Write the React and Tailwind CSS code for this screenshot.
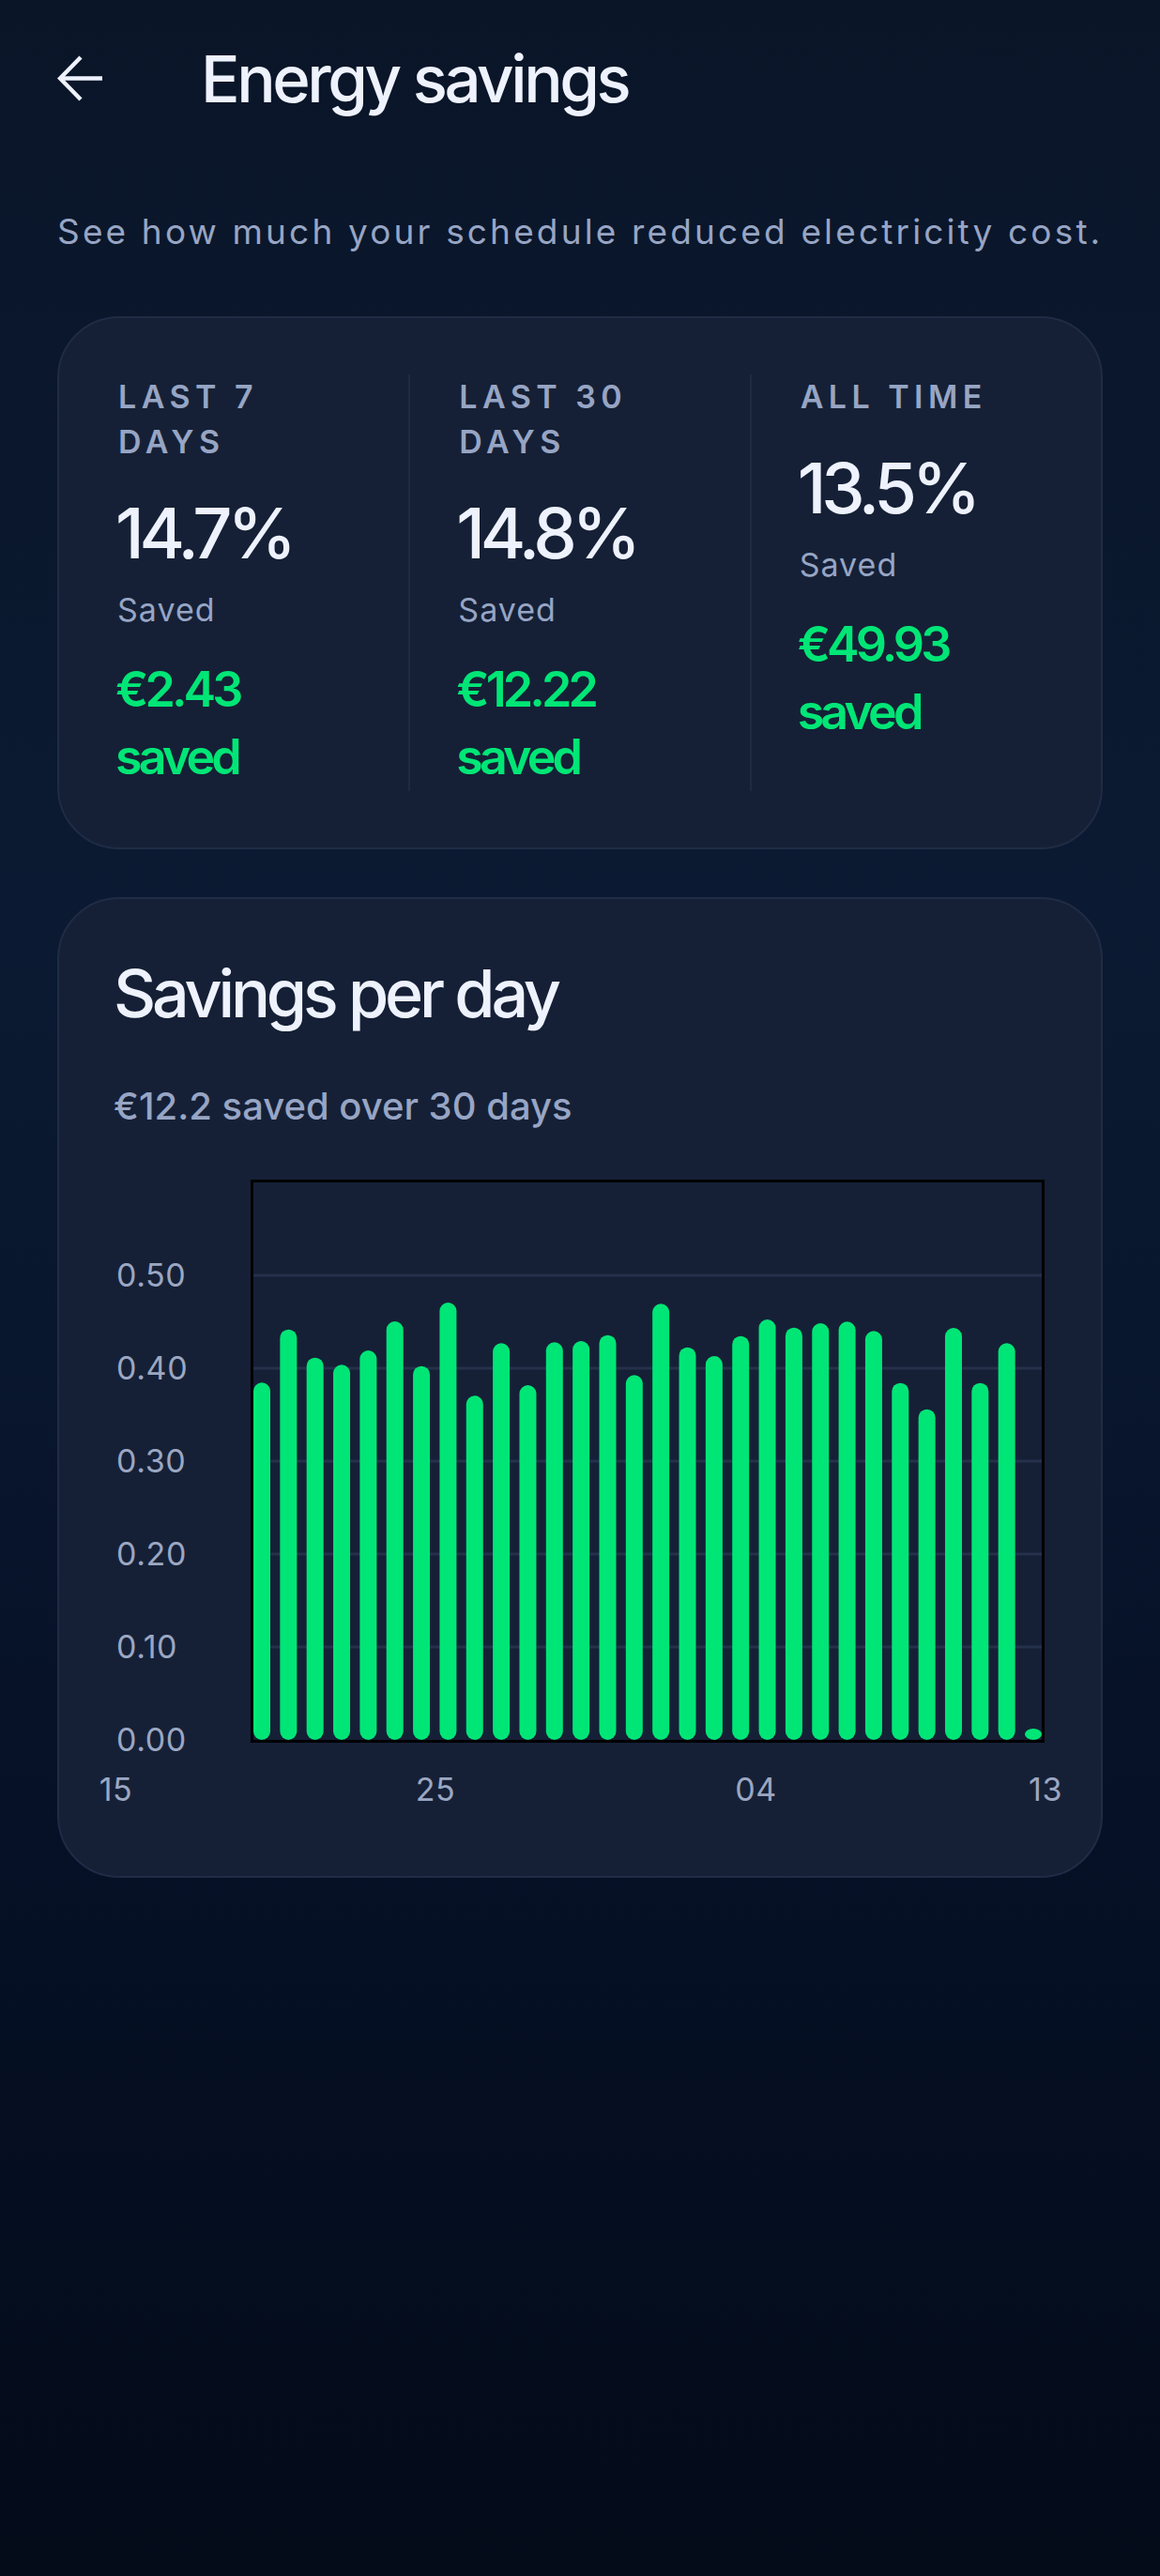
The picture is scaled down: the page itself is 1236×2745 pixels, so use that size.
import React from "react";

const BAR_TOPS = [
  1473.3, 1416.7, 1446.7, 1454.3, 1439, 1408, 1455.7, 1388, 1487.3, 1431.3,
  1476, 1430.3, 1429, 1422.7, 1465.3, 1389.3, 1435.7, 1445, 1423.7, 1406,
  1414.7, 1410, 1408.3, 1418.3, 1473.7, 1501.7, 1415, 1473.7, 1431.3, 1842,
];

const OY = 1207;

function Chart() {
  const grid = [0.5, 0.4, 0.3, 0.2, 0.1];
  const yLabels = [0.5, 0.4, 0.3, 0.2, 0.1, 0.0];
  const xLabels = [
    { t: "15", x: 60.5 },
    { t: "25", x: 401 },
    { t: "04", x: 742.5 },
    { t: "13", x: 1051 },
  ];
  return (
    <svg width="1110" height="724" viewBox="0 0 1110 724" className="block">
      {grid.map((v) => (
        <rect key={v} x="207" y={647 - v * 990 - 1.5} width="840" height="3" fill="#25314b" />
      ))}
      {BAR_TOPS.map((top, i) => {
        const y = top - OY;
        return (
          <rect
            key={i}
            x={207 + i * 28.345}
            y={y}
            width="18"
            height={647 - y}
            rx="9"
            fill="#00e676"
          />
        );
      })}
      <rect x="205.5" y="51.5" width="843" height="597" fill="none" stroke="#000000" strokeWidth="3" />
      {yLabels.map((v) => (
        <text
          key={v}
          x="61"
          y={647 - v * 990 + 12.4}
          fill="#9ba7c2"
          fontSize="34"
          letterSpacing="0.6"
          fontFamily="Inter, sans-serif"
        >
          {v.toFixed(2)}
        </text>
      ))}
      {xLabels.map((l) => (
        <text
          key={l.t}
          x={l.x}
          y="712"
          textAnchor="middle"
          fill="#9ba7c2"
          fontSize="34"
          letterSpacing="0.6"
          fontFamily="Inter, sans-serif"
        >
          {l.t}
        </text>
      ))}
    </svg>
  );
}

function Stat({ label, pct, money }) {
  return (
    <div className="flex-1 min-w-0 flex flex-col">
      <div className="text-[34px] leading-[48px] font-semibold tracking-[0.16em] text-[#97a5c4] uppercase">
        {label.map((l, i) => (
          <div key={i}>{l}</div>
        ))}
      </div>
      <div className="mt-[29px] -ml-[3px] text-[74px] leading-[89px] font-medium tracking-[-0.07em] text-[#eef2fd]">
        {pct}
      </div>
      <div className="mt-[13px] -ml-[1px] text-[34px] leading-[48px] tracking-[0.03em] text-[#97a5c4]">Saved</div>
      <div className="mt-[25px] -ml-[3px] text-[52px] leading-[72px] font-semibold tracking-[-0.075em] text-[#00e676]">
        <div>{money}</div>
        <div>saved</div>
      </div>
    </div>
  );
}

export default function App() {
  return (
    <div
      className="min-h-screen w-full bg-[linear-gradient(180deg,#0a1528_0%,#0b1a32_35%,#09172e_50%,#061127_70%,#040b19_100%)] px-[61px] pb-[40px]"
      style={{ fontFamily: "Inter, 'Noto Sans', sans-serif" }}
    >
      {/* Header */}
      <div className="pt-[42px] h-[126px] flex items-center">
        <div className="h-[84px] flex items-center">
          <svg width="50" height="50" viewBox="0 0 50 50" className="block">
            <path d="M25 2 L3 24.5 L25 47" fill="none" stroke="#eef2fd" strokeWidth="4.4" />
            <path d="M3.5 24.5 H48" fill="none" stroke="#eef2fd" strokeWidth="4.4" />
          </svg>
          <h1 className="ml-[103px] text-[69px] leading-[84px] font-medium tracking-[-0.05em] text-[#eef2fd]">
            Energy savings
          </h1>
        </div>
      </div>

      <p className="mt-[95px] text-[37px] leading-[52px] tracking-[0.085em] text-[#97a5c4] whitespace-nowrap">
        See how much your schedule reduced electricity cost.
      </p>

      {/* Stats card */}
      <div className="mt-[64px] rounded-[66px] border-2 border-[#202b45] bg-[#152036] px-[63px] py-[60px] flex gap-[52px]">
        <Stat label={["LAST 7", "DAYS"]} pct="14.7%" money="€2.43" />
        <div className="w-[2px] bg-[#1f2a42]" />
        <Stat label={["LAST 30", "DAYS"]} pct="14.8%" money="€12.22" />
        <div className="w-[2px] bg-[#1f2a42]" />
        <Stat label={["ALL TIME"]} pct="13.5%" money="€49.93" />
      </div>

      {/* Chart card */}
      <div className="mt-[51px] rounded-[66px] border-2 border-[#202b45] bg-[#152036] pt-[59px] pb-[68px]">
        <div className="px-[58px]">
          <h2 className="text-[70px] leading-[84px] font-medium tracking-[-0.06em] text-[#eef2fd]">
            Savings per day
          </h2>
          <div className="mt-[50px] text-[40px] leading-[56px] font-medium tracking-[0em] text-[#97a5c4]">
            €12.2 saved over 30 days
          </div>
        </div>
        <Chart />
      </div>
    </div>
  );
}
